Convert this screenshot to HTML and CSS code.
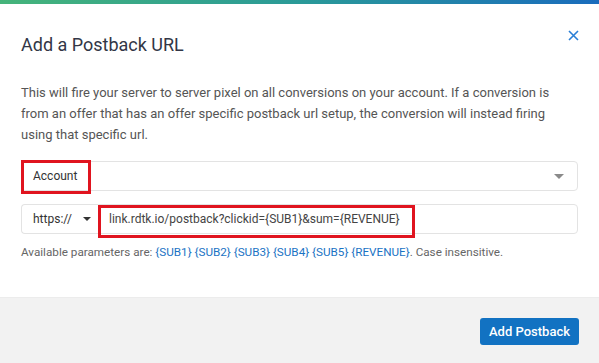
FILE: index.html
```html
<!DOCTYPE html>
<html lang="en">
<head>
    <meta charset="utf-8">
    <title>Add a Postback URL</title>
    <link rel="stylesheet" href="styles.css">
</head>
<body>
    <div class="modal">
        <div class="modal-bar"></div>

        <!-- En-tete -->
        <div class="modal-header">
            <h2>Add a Postback URL</h2>
            <button class="close-btn" aria-label="Close">
                <svg width="11" height="11" viewBox="0 0 11 11">
                    <path d="M1 1 L10 10 M10 1 L1 10" stroke="#2a7fd6" stroke-width="1.6" fill="none"/>
                </svg>
            </button>
        </div>

        <div class="modal-body">
            <p class="intro">This will fire your server to server pixel on all conversions on your account. If a conversion is from an offer that has an offer specific postback url setup, the conversion will instead firing using that specific url.</p>

            <div class="select-box">
                <span class="select-value">Account</span>
                <span class="caret"></span>
                <span class="mark mark-account"></span>
            </div>

            <div class="url-row">
                <div class="protocol">
                    <span>https://</span>
                    <span class="caret caret-dark"></span>
                </div>
                <div class="url-input">
                    <span>link.rdtk.io/postback?clickid={SUB1}&amp;sum={REVENUE}</span>
                    <span class="mark mark-url"></span>
                </div>
            </div>

            <p class="help">Available parameters are: <a>{SUB1}</a> <a>{SUB2}</a> <a>{SUB3}</a> <a>{SUB4}</a> <a>{SUB5}</a> <a>{REVENUE}</a>. Case insensitive.</p>
        </div>

        <div class="modal-footer">
            <button class="primary-btn">Add Postback</button>
        </div>
    </div>
</body>
</html>
```

FILE: styles.css
```css
html, body {
    margin: 0;
    padding: 0;
    background: #fff;
}

body {
    font-family: Roboto, "Liberation Sans", sans-serif;
    color: #555;
}

.modal {
    width: 599px;
    height: 363px;
    display: flex;
    flex-direction: column;
    background: #fff;
    overflow: hidden;
}

.modal-bar {
    height: 4px;
    background: linear-gradient(to right, #45b47a, #2a9a98 50%, #1a6cbd);
}

.modal-header {
    display: flex;
    justify-content: space-between;
    align-items: flex-start;
    padding: 0 20px 0 21px;
}

    .modal-header h2 {
        margin: 29px 0 0;
        font-size: 18px;
        font-weight: 400;
        line-height: 24px;
        color: #323646;
    }

.close-btn {
    margin-top: 25px;
    padding: 0;
    border: none;
    background: none;
    cursor: pointer;
}

.modal-body {
    padding: 0 21px 0 21px;
    flex: 1;
}

.intro {
    margin: 25px 0 0;
    font-size: 13px;
    line-height: 21px;
    color: #555;
}

.select-box {
    position: relative;
    margin-top: 16px;
    height: 30px;
    border: 1px solid #e3e3e3;
    border-radius: 4px;
    box-sizing: border-box;
    display: flex;
    align-items: center;
    justify-content: space-between;
    padding: 0 13px 0 11px;
    font-size: 12px;
    color: #333;
}

.caret {
    width: 0;
    height: 0;
    border-left: 5px solid transparent;
    border-right: 5px solid transparent;
    border-top: 5px solid #8a8a8a;
}

.caret-dark {
    border-left-width: 4px;
    border-right-width: 4px;
    border-top: 4px solid #333;
}

.mark {
    position: absolute;
    border: 3px solid #e0141f;
    box-sizing: border-box;
}

.mark-account {
    left: -1px;
    top: -2px;
    width: 70px;
    height: 34px;
}

.url-row {
    display: flex;
    margin-top: 13px;
    height: 30px;
    font-size: 12px;
    color: #333;
}

.protocol {
    width: 77px;
    flex-shrink: 0;
    box-sizing: border-box;
    border: 1px solid #e3e3e3;
    border-right: none;
    border-radius: 4px 0 0 4px;
    display: flex;
    align-items: center;
    justify-content: space-between;
    padding: 0 7px 0 11px;
}

.url-input {
    position: relative;
    flex: 1;
    box-sizing: border-box;
    border: 1px solid #e3e3e3;
    border-radius: 0 4px 4px 0;
    display: flex;
    align-items: center;
    padding-left: 10px;
    color: #444;
}

.mark-url {
    left: -1px;
    top: 0;
    width: 317px;
    height: 33px;
}

.help {
    margin: 10px 0 0;
    font-size: 11.7px;
    line-height: 16px;
    color: #666;
}

    .help a {
        color: #1a73c4;
    }

.modal-footer {
    height: 66px;
    background: #f2f2f2;
    border-top: 1px solid #ececec;
    display: flex;
    justify-content: flex-end;
    align-items: flex-start;
    padding: 20px 20px 0 0;
    box-sizing: border-box;
}

.primary-btn {
    height: 27px;
    width: 99px;
    border: none;
    border-radius: 3px;
    background: #1272c2;
    color: #fff;
    font-family: Roboto, "Liberation Sans", sans-serif;
    font-size: 13px;
    font-weight: 500;
    cursor: pointer;
}
```
